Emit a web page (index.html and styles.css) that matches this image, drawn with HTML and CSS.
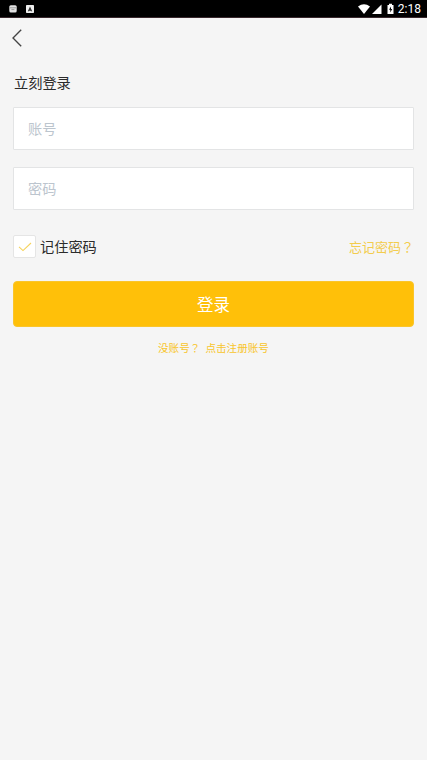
FILE: index.html
```html
<!DOCTYPE html>
<html lang="zh-CN">
<head>
<meta charset="utf-8">
<title>登录</title>
<link rel="stylesheet" href="styles.css">
</head>
<body>
<header class="status">
  <svg class="note" width="8" height="8" viewBox="0 0 8 8">
    <rect x=".3" y=".3" width="7.4" height="7.2" rx="1.5" fill="#e2e2e2"/>
    <path d="M1 2.8h6M2.4 4.6h3" stroke="#888" stroke-width=".8"/>
  </svg>
  <svg class="app" width="8" height="8" viewBox="0 0 8 8">
    <rect width="8" height="8" rx=".7" fill="#eee"/>
    <path d="M1.8 6.3 4 1.5l2.2 4.8H5L4 5.6l-1 .7z" fill="#333"/>
  </svg>
  <svg class="signals" width="37" height="12" viewBox="0 0 37 12">
    <path d="M0 3.5Q6 -.8 12 3.5L6 11z" fill="#fff"/>
    <path d="M14 11 23.5 1.5V11z" fill="#fff"/>
    <path d="M29.5 2h1.5V.8h3V2h1.5v9h-6z" fill="#fff"/>
    <path d="M33 3.5 31 6.7h1.3V9.5L34.2 6H33z" fill="#000"/>
  </svg>
  <span class="time">2:18</span>
</header>
<nav class="nav">
  <svg width="10" height="18" viewBox="0 0 10 18"><path d="M9.2 .8 1 9l8.2 8.2" fill="none" stroke="#444" stroke-width="1.35"/></svg>
</nav>
<main class="login">
  <h1 class="title">立刻登录</h1>
  <input class="field" type="text" placeholder="账号" aria-label="账号">
  <input class="field" type="password" placeholder="密码" aria-label="密码">
  <div class="options">
    <span class="check"><svg width="14" height="10" viewBox="0 0 14 10"><path d="M1 4.8 5 8.6 13 1" fill="none" stroke="#f6d35c" stroke-width="1.1"/></svg></span>
    <span class="remember">记住密码</span>
    <a class="forgot">忘记密码<span class="mark" lang="zh-TW">？</span></a>
  </div>
  <button class="submit">登录</button>
  <p class="register"><span>没账号<span class="mark" lang="zh-TW">？</span></span><span>点击注册账号</span></p>
</main>
</body>
</html>
```
FILE: styles.css
```css
* { box-sizing: border-box; }
body {
  margin: 0;
  min-height: 760px;
  background: #f5f5f5;
  color: #2b2b2b;
  font-family: "Noto Sans CJK SC", sans-serif;
}
.status {
  display: flex;
  align-items: center;
  height: 18px;
  padding: 1px 6px 0 9px;
  background: #000;
  border-bottom: 1px solid #39282d;
}
.note { flex: none; }
.app { flex: none; margin-left: 9px; }
.signals { margin: -1px 0 0 auto; }
.time {
  margin-left: 3px;
  color: #fff;
  font: 12px/17px Roboto, sans-serif;
}
.nav {
  display: flex;
  align-items: center;
  height: 40px;
  padding-left: 12px;
}
.login { padding: 13px 13px 0; }
.title {
  margin: 0 0 13px 1px;
  font-size: 14.2px;
  font-weight: 400;
  line-height: 23px;
}
.field {
  display: block;
  width: 401px;
  height: 43px;
  margin: 0 0 17px;
  padding: 0 14px 2px;
  border: 1px solid #e3e4e5;
  border-radius: 1px;
  outline: 0;
  background: #fff;
  font: 14.2px "Noto Sans CJK SC", sans-serif;
}
.field::placeholder { color: #bcc5ce; opacity: 1; }
.options {
  display: flex;
  align-items: center;
  height: 23px;
  margin-top: 25px;
}
.check {
  display: flex;
  align-items: center;
  justify-content: center;
  width: 23px;
  height: 23px;
  border: 1px solid #e5e5e5;
  border-radius: 2px;
  background: #fff;
}
.remember { margin: -2px 0 0 4px; font-size: 14.2px; }
.forgot {
  margin: -1px 0 0 auto;
  color: #f3cc4c;
  font-size: 13px;
}
.mark { font-family: "Noto Sans CJK TC", sans-serif; }
.submit {
  display: block;
  width: 401px;
  height: 46px;
  margin: 23px 0 0;
  padding: 0;
  border: 1px solid #fac52b;
  border-radius: 4px;
  background: #ffc009;
  color: #fff;
  font: 16.5px "Noto Sans CJK SC", sans-serif;
}
.register {
  display: flex;
  justify-content: center;
  gap: 5px;
  margin: 13px 0 0;
  color: #f8c52c;
  font-size: 10.6px;
  line-height: 16px;
}
```
